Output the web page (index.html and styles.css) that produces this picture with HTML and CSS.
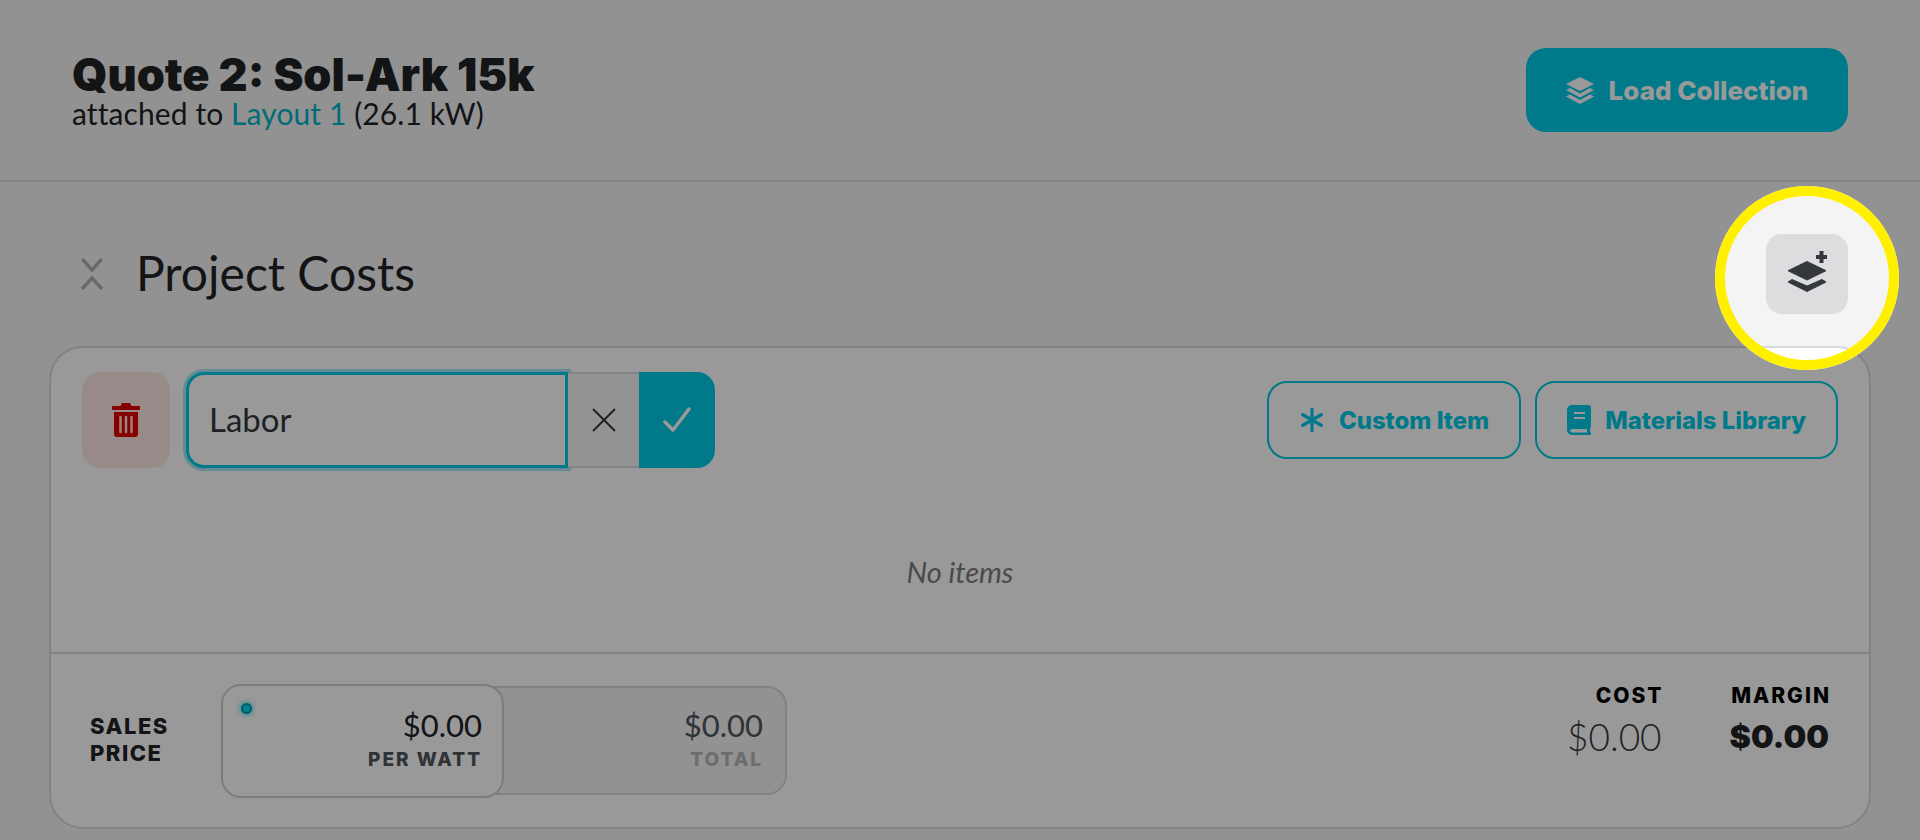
FILE: index.html
```html
<!DOCTYPE html>
<html>
<head>
<meta charset="utf-8">
<title>Quote 2: Sol-Ark 15k</title>
<link rel="stylesheet" href="styles.css">
</head>
<body>
	<!-- header -->
	<div class="top">
		<div>
			<h1>Quote 2: Sol-Ark 15k</h1>
			<div class="sub">attached to <a>Layout 1</a> (26.1 kW)</div>
		</div>
		<button class="load">
			<svg width="28" height="27" viewBox="0 0 28 27"><path fill="currentColor" d="M14 0 28 7 14 14 0 7Z"/><path fill="currentColor" d="M4 11 14 16.500 24 11 28 13 14 20.500 0 13Z"/><path fill="currentColor" d="M4 17.500 14 23 24 17.500 28 19.500 14 27 0 19.500Z"/></svg>
			Load Collection
		</button>
	</div>

	<!-- section -->
	<div class="head">
		<svg class="fold" width="22" height="32" viewBox="0 0 22 32"><path d="M1 1 11 12 21 1M1 31 11 20 21 31"/></svg>
		<h2>Project Costs</h2>
		<button class="add">
			<svg width="40" height="42" viewBox="0 0 40 42"><g fill="#34383c" stroke="#34383c" stroke-linejoin="round"><path d="M20 10.500 39 19.700 20 29 1 19.700Z"/><path d="M5 28.500 20 35 35 28.500 39 31 20 40.500 1 31Z"/></g><path fill="#34383c" d="M32.500 0h4v4h3.500v4h-3.500v4h-4V8H29V4h3.500Z"/></svg>
		</button>
	</div>

	<div class="card">
		<div class="edit">
			<button class="del">
				<svg width="28" height="34" viewBox="0 0 28 34"><path fill="#e00000" d="M10 0h8l1.500 3H27a1 1 0 0 1 1 1v2a1 1 0 0 1-1 1H1A1 1 0 0 1 0 6V4a1 1 0 0 1 1-1h7.500ZM2 9h24v22a3 3 0 0 1-3 3H5a3 3 0 0 1-3-3Z"/><path stroke="#ffd9d9" stroke-width="2.500" stroke-linecap="round" d="M8.500 14v15M14 14v15M19.500 14v15"/></svg>
			</button>
			<div class="namebox">
				<input class="name" type="text" value="Labor">
				<button class="no"><svg width="26" height="26" viewBox="0 0 26 26"><path d="M2 2 24 24M24 2 2 24"/></svg></button>
				<button class="yes"><svg width="28" height="26" viewBox="0 0 28 26"><path d="M2 15 10 23 26 2"/></svg></button>
			</div>
			<div class="tools">
				<button class="tool">
					<svg class="star" width="26" height="26" viewBox="0 0 26 26"><path d="M13 1v24M2.500 7 23.500 19M23.500 7 2.500 19"/></svg>
					Custom Item
				</button>
				<button class="tool">
					<svg width="24" height="30" viewBox="0 0 24 30"><path fill="#00cbe6" fill-rule="evenodd" d="M5 0h16a3 3 0 0 1 3 3v18c0 1-.5 1.800-1 2.200v3.300c.6.300 1 .8 1 1.500v.5a1.500 1.500 0 0 1-1.500 1.500H5a5 5 0 0 1-5-5V5a5 5 0 0 1 5-5ZM7 7v2h11V7Zm0 5v2h11v-2Zm-2 12a1.800 1.800 0 0 0 0 3.600h15V24Z"/></svg>
					Materials Library
				</button>
			</div>
		</div>
		<div class="empty">No items</div>
		<div class="foot">
			<div class="sp-label">SALES<br>PRICE</div>
			<div class="price">
				<div class="pbox per">
					<span class="dot"></span>
					<div class="amt">$0.00</div>
					<div class="unit">PER WATT</div>
				</div>
				<div class="pbox tot">
					<div class="amt">$0.00</div>
					<div class="unit">TOTAL</div>
				</div>
			</div>
			<div class="stat cost">
				<div class="stat-l">COST</div>
				<div class="stat-v">$0.00</div>
			</div>
			<div class="stat margin">
				<div class="stat-l">MARGIN</div>
				<div class="stat-v">$0.00</div>
			</div>
		</div>
	</div>

	<!-- tour spotlight -->
	<div class="spot"></div>
</body>
</html>
```

FILE: styles.css
```css
*{margin:0;padding:0;box-sizing:border-box;}
html,body{height:100%;}
body{
	position:relative;
	overflow:hidden;
	background:#f4f4f5;
	color:#1e2226;
	font-family:"Lato","Liberation Sans",sans-serif;
}
button{border:0;background:none;font-family:inherit;cursor:pointer;}
svg{display:block;flex:none;}

.top{
	display:flex;
	justify-content:space-between;
	align-items:center;
	height:182px;
	padding:0 72px;
	border-bottom:2px solid #dcdde0;
}
h1{font-family:"Inter",sans-serif;font-size:45px;font-weight:900;line-height:36px;margin-top:9px;}
.sub{font-size:30px;font-weight:400;line-height:40px;letter-spacing:.1px;}
.sub a{color:#00b5c9;}
.load{
	display:flex;
	align-items:center;
	gap:15px;
	width:322px;
	height:84px;
	justify-content:center;
	border-radius:20px;
	background:#00cbe6;
	color:#fff;
	font-family:"Inter",sans-serif;
	font-size:26px;
	font-weight:800;
}

.head{
	display:flex;
	align-items:center;
	height:164px;
	padding:20px 72px 0 81px;
}
.fold{fill:none;stroke:#aeb0b3;stroke-width:3.500;}
h2{flex:1;margin:-4px 0 0 33px;font-size:48px;font-weight:400;}
.add{
	display:flex;
	align-items:center;
	justify-content:center;
	width:82px;
	height:80px;
	padding-bottom:5px;
	border-radius:16px;
	background:#dddddf;
}

.card{
	height:483px;
	margin:0 49px;
	border:2px solid #d8d9dc;
	border-radius:34px;
	background:#fff;
}
.edit{
	display:flex;
	align-items:center;
	height:96px;
	margin:24px 31px 0 31px;
}
.del{
	display:flex;
	align-items:center;
	justify-content:center;
	width:88px;
	height:96px;
	border-radius:18px;
	background:#ffe6e6;
}
.namebox{display:flex;height:96px;margin-left:16px;}
.name{
	width:382px;
	height:96px;
	padding:0 0 2px 20px;
	border:3px solid #00cbe6;
	border-radius:18px 0 0 18px;
	box-shadow:0 0 0 3px #a6e9f3;
	background:#fff;
	outline:0;
	color:#33373b;
	font-family:inherit;
	font-size:33px;
}
.no{
	display:flex;
	align-items:center;
	justify-content:center;
	width:71px;
	border-top:2px solid #dcdde0;
	border-bottom:2px solid #dcdde0;
	background:#f6f6f7;
}
.no svg{fill:none;stroke:#33373b;stroke-width:2;}
.yes{
	display:flex;
	align-items:center;
	justify-content:center;
	width:76px;
	border-radius:0 18px 18px 0;
	background:#00cbe6;
}
.yes svg{fill:none;stroke:#fff;stroke-width:3.500;stroke-linecap:round;stroke-linejoin:round;}
.tools{display:flex;gap:14px;margin-left:auto;}
.tool{
	display:flex;
	align-items:center;
	justify-content:center;
	gap:14px;
	height:78px;
	padding:0 30px;
	border:2px solid #00cbe6;
	border-radius:20px;
	color:#00cbe6;
	font-family:"Inter",sans-serif;
	font-size:23.900px;
	font-weight:800;
}
.star{fill:none;stroke:#00cbe6;stroke-width:3.200;}

.empty{
	height:184px;
	padding-top:23px;
	line-height:161px;
	text-align:center;
	font-size:29px;
	font-style:italic;
	color:#7a7d80;
}
.foot{
	display:flex;
	align-items:center;
	height:175px;
	padding:0 40px 0 39px;
	border-top:2px solid #dcdde0;
}
.sp-label{
	width:131px;
	margin-top:-2px;
	font-family:"Inter",sans-serif;
	font-size:22px;
	font-weight:800;
	line-height:27px;
	letter-spacing:1.500px;
}
.price{display:flex;align-items:center;margin-right:auto;}
.pbox{text-align:right;}
.per{
	position:relative;
	z-index:1;
	width:283px;
	height:114px;
	padding:21px 20px 0 0;
	border:2px solid #cfd0d3;
	border-radius:20px;
	background:#fff;
}
.tot{
	width:301px;
	height:109px;
	margin-left:-18px;
	padding:19px 22px 0 0;
	border:2px solid #d8d9dc;
	border-radius:0 20px 20px 0;
	background:#f4f4f5;
}
.amt{font-size:31px;line-height:36px;}
.unit{font-family:"Inter",sans-serif;font-size:19px;font-weight:800;letter-spacing:2px;line-height:33px;color:#50555a;}
.tot .amt{color:#50555a;}
.tot .unit{color:#b4b6b9;}
.dot{
	position:absolute;
	left:18px;
	top:17px;
	width:11px;
	height:11px;
	border:2px solid #0098ad;
	border-radius:50%;
	background:#00d8f0;
	box-shadow:0 0 6px #00d8f0;
}
.stat{text-align:right;margin-top:-36px;}
.cost{margin-right:68px;}
.stat-l{margin-right:-2px;font-family:"Inter",sans-serif;font-size:21px;font-weight:800;letter-spacing:2px;line-height:28px;color:#000;}
.stat-v{font-size:37px;line-height:54px;}
.cost .stat-v{font-weight:300;color:#33373b;}
.margin .stat-v{font-family:"Inter",sans-serif;font-size:32px;font-weight:900;}

/* lies over the whole page, the shadow is the dim layer */
.spot{
	position:absolute;
	z-index:2;
	left:1715px;
	top:186px;
	width:184px;
	height:184px;
	border:10px solid #fff000;
	border-radius:50%;
	box-shadow:0 0 0 2400px rgba(0,0,0,.4);
}
```
